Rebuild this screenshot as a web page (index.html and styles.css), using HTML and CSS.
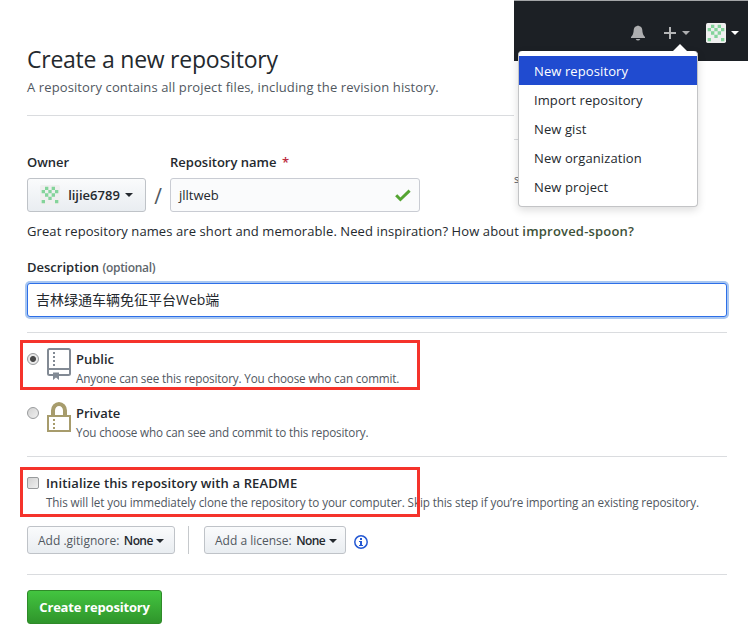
FILE: index.html
```html
<!DOCTYPE html>
<html lang="en">
<head>
<meta charset="utf-8">
<title>Create a new repository</title>
<link rel="stylesheet" href="styles.css">
</head>
<body>
<svg class="defs" width="0" height="0">
  <symbol id="identicon" viewBox="0 0 60 60">
    <rect width="60" height="60" rx="5" fill="#efefef"/>
    <path fill="#84d49b" d="M15 5h10v10h-10zM35 5h10v10h-10zM5 15h10v10H5zM25 15h10v10H25zM45 15h10v10H45zM15 25h10v10H15zM35 25h10v10H35zM25 35h10v10H25zM5 45h10v10H5zM45 45h10v10H45z"/>
  </symbol>
</svg>
<main class="page">
  <h1>Create a new repository</h1>
  <p class="lead">A repository contains all project files, including the revision history.</p>
  <hr class="rule">
  <div class="fields">
    <div class="owner">
      <label>Owner</label>
      <button class="btn owner-btn"><svg width="20" height="20"><use href="#identicon"/></svg><b>lijie6789</b><i class="caret"></i></button>
    </div>
    <span class="slash">/</span>
    <div class="repo">
      <label>Repository name <em>*</em></label>
      <div class="input repo-input"><span>jlltweb</span>
        <svg width="16" height="13" viewBox="0 0 16 13"><path d="M1.2 6.2l4.2 4.3L14.6 1.6" fill="none" stroke="#55a532" stroke-width="3"/></svg>
      </div>
    </div>
  </div>
  <p class="hint">Great repository names are short and memorable. Need inspiration? How about <b>improved-spoon?</b></p>
  <label class="desc-label">Description <small>(optional)</small></label>
  <div class="input desc-input">吉林绿通车辆免征平台<span>Web</span>端</div>
  <hr class="rule rule-desc">
  <div class="option framed">
    <i class="radio checked"></i>
    <svg class="repo-icon" width="24" height="33" viewBox="0 0 24 33">
      <path fill="none" stroke="#828a94" stroke-width="2" d="M6 27H2.500Q1 27 1 25.500V2.500Q1 1 2.500 1H21.500Q23 1 23 2.500V25.500Q23 27 21.500 27H12M1 21h22"/>
      <path fill="#828a94" d="M6 4h2v2H6zM6 8h2v2H6zM6 12h2v2H6zM6 16h2v2H6zM6 24.500h6V32l-3-2.500L6 32z"/>
    </svg>
    <div><strong>Public</strong><p>Anyone can see this repository. You choose who can commit.</p></div>
  </div>
  <div class="option private">
    <i class="radio"></i>
    <svg class="lock-icon" width="24" height="31" viewBox="0 0 24 31">
      <path fill="none" stroke="#a79c6c" stroke-width="4" d="M6 15V8.500a6 6.500 0 0 1 12 0V15"/>
      <path fill="none" stroke="#a79c6c" stroke-width="2" d="M1 14h22v15H1z"/>
      <path fill="#a79c6c" d="M6 17h2v2H6zM6 21h2v2H6zM6 25h2v2H6z"/>
    </svg>
    <div><strong>Private</strong><p>You choose who can see and commit to this repository.</p></div>
  </div>
  <hr class="rule rule-private">
  <div class="option framed readme">
    <i class="checkbox"></i>
    <div><strong>Initialize this repository with a README</strong><p>This will let you immediately clone the repository to your computer. Skip this step if you’re importing an existing repository.</p></div>
  </div>
  <div class="extras">
    <button class="btn small-btn ignore-btn"><span>Add .gitignore:</span><b>None</b><i class="caret"></i></button>
    <span class="divider"></span>
    <button class="btn small-btn license-btn"><span>Add a license:</span><b>None</b><i class="caret"></i></button>
    <svg class="info" width="14" height="14" viewBox="0 0 14 14"><circle cx="7" cy="7" r="6.200" fill="none" stroke="#2458d3" stroke-width="1.500"/><path fill="#2458d3" d="M6 3h2v2H6zM5 6h3v4h1v1H5v-1h1V7H5z"/></svg>
  </div>
  <hr class="rule rule-extras">
  <button class="create">Create repository</button>
</main>
<aside class="overlay">
  <header class="topbar">
    <svg class="bell" width="14" height="16" viewBox="0 0 14 16"><path fill="#adaeb0" d="M6 1q1-1 2 0 3 .6 3.300 4Q11.500 10 14 12v1H0v-1Q2.500 10 2.700 5 3 1.600 6 1zM4.700 14h4.600q-.8 1.500-2.300 1.500T4.700 14z"/></svg>
    <svg class="plus" width="12" height="12" viewBox="0 0 12 12"><path d="M6 0v12M0 6h12" stroke="#b4b5b7" stroke-width="2"/></svg>
    <i class="caret gray"></i>
    <svg class="avatar" width="20" height="20"><use href="#identicon"/></svg>
    <i class="caret white"></i>
  </header>
  <div class="peek">st</div>
  <nav class="menu">
    <a class="active">New repository</a>
    <a>Import repository</a>
    <a>New gist</a>
    <a>New organization</a>
    <a>New project</a>
  </nav>
</aside>
</body>
</html>
```
FILE: styles.css
```css
*, *::before, *::after { box-sizing: border-box; }
body {
  margin: 0;
  width: 748px;
  height: 643px;
  overflow: hidden;
  position: relative;
  background: #fff;
  color: #24292e;
  font: 13px/20px "Open Sans", "Noto Sans CJK SC", sans-serif;
}
.defs { position: absolute; }
.page { width: 701px; margin-left: 27px; padding-top: 45px; }
h1, p { margin: 0; font-weight: 400; white-space: nowrap; }
h1 { height: 32px; font-size: 23px; line-height: 29px; letter-spacing: -.24px; }
.lead { height: 38px; color: #51585f; letter-spacing: .11px; }
button { font: inherit; color: inherit; margin: 0; padding: 0; }
b, strong, label { font-weight: 600; }
label { display: block; white-space: nowrap; }
.rule { height: 1px; margin: 0; border: 0; background: #dadcdf; width: 700px; }
.fields { display: flex; margin-top: 36px; height: 60px; }
.fields label { height: 26px; }
.fields em { color: #bd2c3f; font-style: normal; margin-left: 2px; }
.btn {
  display: flex;
  align-items: center;
  border: 1px solid #bfc3c8;
  border-radius: 3px;
  background: linear-gradient(#fafbfc, #e9edf1);
  white-space: nowrap;
}
.caret { display: block; border: 4px solid transparent; border-top-color: currentColor; border-bottom: 0; }
.owner-btn { width: 119px; height: 34px; padding-left: 12px; }
.owner-btn b { margin-left: 8px; width: 52px; }
.owner-btn .caret { margin-left: 5px; }
.slash { width: 24px; padding-top: 34px; text-align: center; font-size: 21px; line-height: 20px; color: #51585f; }
.input {
  display: flex;
  align-items: center;
  height: 34px;
  border: 1px solid #c9ccd3;
  border-radius: 3px;
  padding-left: 8px;
  background: #fafbfc;
}
.repo-input { width: 250px; justify-content: space-between; padding-right: 8px; }
.hint { margin-top: 9px; height: 36px; letter-spacing: .09px; }
.hint b { color: #3d5138; letter-spacing: .2px; }
.desc-label { height: 26px; }
.desc-label small { font-size: 12px; color: #60666c; letter-spacing: -.3px; }
.desc-input { background: #fff; border: 1px solid #2d6fe8; box-shadow: 0 0 0 2px #a9c7f1; font-size: 14px; width: 700px; }
.rule-desc { margin-top: 15px; }
.option { display: flex; position: relative; white-space: nowrap; }
.option strong { display: block; line-height: 20px; margin-top: 3px; }
.option p { font-size: 11.7px; line-height: 18px; color: #51585f; letter-spacing: -.15px; }
.framed { width: 400px; height: 50px; margin: 7px 0 0 -7px; padding: 6px 0 0 4px; }
.framed::after { content: ""; position: absolute; inset: 0; border: 3px solid #f5332b; }
.framed > i { margin-left: 3px; }
.radio, .checkbox { flex: none; width: 12px; height: 12px; margin-top: 7px; border: 1px solid #989a9c; background: linear-gradient(135deg, #d2d2d2, #f0f0f0); }
.radio { border-radius: 50%; }
.checkbox { border-radius: 2px; }
.checked { background: radial-gradient(circle, #484848 0 2.500px, #e9e9e9 3.500px); }
.option svg { flex: none; margin: 2px 5px 0 8px; }
.private { height: 58px; padding-top: 10px; }
.rule-private { margin-top: 8px; }
.readme { margin-top: 10px; padding-top: 3px; }
.readme > div { margin-left: 7px; }
.readme strong { letter-spacing: .13px; }
.readme p { letter-spacing: -.12px; }
.extras { display: flex; margin-top: 9px; height: 28px; }
.small-btn { height: 28px; font-size: 12px; padding: 1px 0 0 10px; }
.small-btn > span { color: #51585f; }
.small-btn b { margin-left: 4px; width: 30px; letter-spacing: -.6px; }
.small-btn .caret { margin-left: 3px; }
.ignore-btn { width: 148px; }
.divider { width: 1px; margin: 0 15px 0 13px; background: #c6c9cc; }
.license-btn { width: 142px; }
.info { margin: 9px 0 0 8px; }
.rule-extras { margin-top: 20px; }
.create { display: flex; align-items: center; justify-content: center; margin-top: 15px; width: 135px; height: 34px; border: 1px solid #2f8a29; border-radius: 3px; background: linear-gradient(#43c540, #2f952b); color: #fff; font-weight: 700; letter-spacing: -.2px; white-space: nowrap; }
.overlay { position: absolute; left: 514px; top: 0; width: 234px; height: 216px; background: #fff; }
.topbar { display: flex; align-items: center; height: 61px; padding: 4px 0 0 117px; border-top: 1px solid #a3a5a7; background: #1c2025; }
.plus { margin-left: 19px; }
.topbar .caret { margin-left: 6px; color: #adaeb0; }
.topbar .avatar { margin-left: 16px; }
.topbar .caret.white { margin-left: 5px; color: #fff; }
.peek { width: 10px; margin-top: 78px; border-top: 1px solid #dadcdf; padding-top: 29px; font-size: 11px; letter-spacing: -1px; color: #51585f; }
.menu { position: absolute; left: 4px; top: 51px; width: 180px; height: 156px; padding-top: 5px; border: 1px solid #c3c4c6; border-top: 0; border-radius: 4px; background: #fff; box-shadow: 0 3px 9px rgba(0,0,0,.14); }
.menu::before { content: ""; position: absolute; left: 154px; top: -7px; border: 7px solid transparent; border-top: 0; border-bottom-color: #fff; }
.menu a { display: block; height: 29px; padding-left: 15px; line-height: 30px; letter-spacing: .1px; white-space: nowrap; }
.menu .active { background: #204bd0; color: #fff; }
```
